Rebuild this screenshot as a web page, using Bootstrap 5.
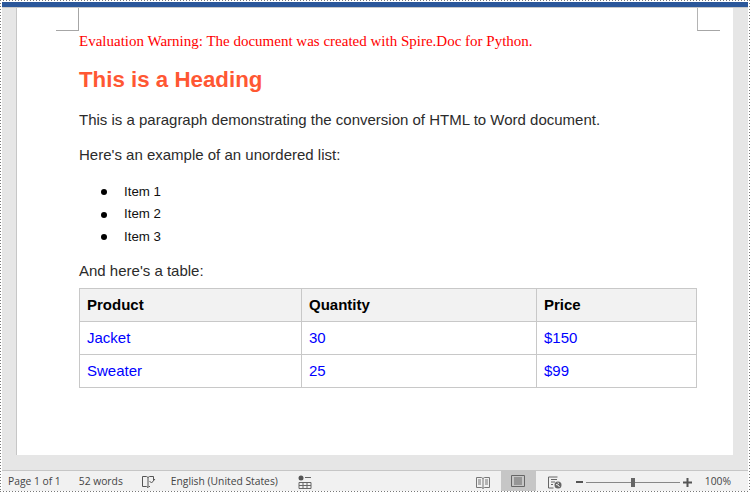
<!DOCTYPE html>
<html lang="en">
<head>
    <meta charset="UTF-8">
    <title>Word document</title>
    <link href="https://cdn.jsdelivr.net/npm/bootstrap@5.3.0/dist/css/bootstrap.min.css" rel="stylesheet">
    <style>
        html, body { height: 100%; overflow: hidden; }
        body { font-family: "Liberation Sans", Arial, sans-serif; background: #fff; color: #222; }
        .word-frame {
            width: 750px; height: 492px; padding: 2px;
            background:
                linear-gradient(90deg, #777 1px, transparent 1px) 0 0 / 3px 1px repeat-x,
                linear-gradient(90deg, #777 1px, transparent 1px) 0 100% / 3px 1px repeat-x,
                linear-gradient(#777 1px, transparent 1px) 0 0 / 1px 3px repeat-y,
                linear-gradient(#777 1px, transparent 1px) 100% 0 / 1px 3px repeat-y;
        }
        .title-strip { height: 5px; background: #2b579a; border-bottom: 1px solid #c9c9c9; box-sizing: content-box; }
        .canvas-area { height: 462px; background: #e6e6e6; padding: 0 15px 15px 14px; }
        .doc-page { position: relative; height: 447px; background: #fff; border-left: 1px solid #c6c6c6; padding: 25px 36px 0 62px; }
        .crop-l, .crop-r { position: absolute; top: 0; width: 23px; height: 23px; border-bottom: 1px solid #a6a6a6; }
        .crop-l { left: 39px; border-right: 1px solid #a6a6a6; }
        .crop-r { right: 13px; border-left: 1px solid #b4b4b4; }
        .eval-note { font-family: "Liberation Serif", "Times New Roman", serif; font-size: 15px; line-height: 17px; color: #f00; margin-bottom: 16px; }
        .doc-heading { font-family: "Liberation Sans", Arial, sans-serif; font-size: 22.3px; font-weight: 700; line-height: 28px; color: #ff5733; margin-bottom: 17px; }
        .doc-text { font-size: 15px; line-height: 18px; margin-bottom: 17px; color: #2b2b2b; }
        .doc-list { font-size: 13.3px; line-height: 22.4px; margin-bottom: 14px; padding-left: 22px; color: #111; list-style: none; }
        .doc-list li { display: flex; align-items: center; }
        .doc-list li::before { content: ""; width: 6px; height: 6px; border-radius: 50%; background: #000; margin-right: 17px; }
        .doc-table { font-size: 15px; width: 617px; table-layout: fixed; margin: 0; border-color: #c8c8c8; }
        .doc-table th, .doc-table td { padding: 6px 7px; height: 33px; line-height: 20px; vertical-align: middle; color: #00f; }
        .doc-table th { background: #f2f2f2; color: #000; }
        .status-strip { height: 18px; padding-top: 2px; background: #f1f1f1; border-top: 1px solid #c6c6c6; font-size: 10.3px; font-family: "Open Sans", sans-serif; color: #444; box-sizing: content-box; }
        .status-strip svg { display: block; }
        .view-on { background: #c6c6c6; width: 35px; height: 20px; margin-top: -2px; }
        .zoom-track { width: 94px; height: 1px; background: #888; position: relative; }
        .zoom-thumb { position: absolute; left: 45px; top: -4px; width: 4px; height: 9px; background: #666; }
    </style>
</head>
<body>
    <div class="word-frame">
        <div class="title-strip"></div>
        <div class="canvas-area">
            <div class="doc-page">
                <div class="crop-l"></div>
                <div class="crop-r"></div>
                <p class="eval-note">Evaluation Warning: The document was created with Spire.Doc for Python.</p>
                <h1 class="doc-heading">This is a Heading</h1>
                <p class="doc-text">This is a paragraph demonstrating the conversion of HTML to Word document.</p>
                <p class="doc-text">Here's an example of an unordered list:</p>
                <ul class="doc-list">
                    <li>Item 1</li>
                    <li>Item 2</li>
                    <li>Item 3</li>
                </ul>
                <p class="doc-text mb-2">And here's a table:</p>
                <table class="table table-bordered doc-table">
                    <colgroup><col style="width:222px"><col style="width:235px"><col style="width:160px"></colgroup>
                    <tr><th>Product</th><th>Quantity</th><th>Price</th></tr>
                    <tr><td>Jacket</td><td>30</td><td>$150</td></tr>
                    <tr><td>Sweater</td><td>25</td><td>$99</td></tr>
                </table>
            </div>
        </div>
        <div class="status-strip d-flex align-items-center">
            <span style="margin-left:6px">Page 1 of 1</span>
            <span style="margin-left:18px">52 words</span>
            <svg style="margin-left:18px" width="15" height="14" viewBox="0 0 15 14" fill="none" stroke="#555"><path d="M1.500 1.500h4l1.500 1v10l-1.500-1h-4zM7 2.500l1.500-1h4v4M7 12.500l1-1h1"/><path d="M8.500 6l2 2 3.500-4"/></svg>
            <span style="margin-left:15px">English (United States)</span>
            <svg style="margin-left:20px" width="14" height="14" viewBox="0 0 14 14" fill="none" stroke="#666"><circle cx="3" cy="3" r="2.500" fill="#555" stroke="none"/><path d="M7 2.500h6M1 7.500h12v6H1zM5 7.500v6M9 7.500v6M1 10.500h12"/></svg>
            <div class="ms-auto d-flex align-items-center">
                <svg width="14" height="13" viewBox="0 0 14 13" fill="none" stroke="#777"><path d="M.5 1.500h5l1.500 1 1.500-1h5v10h-5l-1.500 1-1.500-1h-5zM7 2.500v9.500M2 4h3M2 6h3M2 8h3M9 4h3M9 6h3M9 8h3"/></svg>
                <div class="view-on d-flex align-items-center justify-content-center" style="margin-left:11px">
                    <svg width="14" height="12" viewBox="0 0 14 12" fill="none" stroke="#666"><path d="M.5.500h13v11H.5zM3 3h8M3 5h8M3 7h8M3 9h8"/></svg>
                </div>
                <svg style="margin-left:12px" width="14" height="13" viewBox="0 0 14 13" fill="none" stroke="#666"><path d="M9.500 1H.5v11h5M3 3.500h6M3 6h4M3 8.500h2"/><circle cx="10" cy="9" r="3.500" fill="#666" stroke="none"/><path d="M8 8.500l2 .5 1.500 2M10 6.500l.5 1.500" stroke="#f1f1f1"/></svg>
                <span class="d-block" style="width:7px;height:2px;background:#555;margin-left:14px"></span>
                <div class="zoom-track" style="margin-left:3px"><span class="zoom-thumb"></span></div>
                <svg style="margin-left:3px" width="9" height="9" viewBox="0 0 9 9" stroke="#555" stroke-width="2"><path d="M0 4.500h9M4.500 0v9"/></svg>
                <span style="margin-left:13px;margin-right:17px">100%</span>
            </div>
        </div>
    </div>
    <script src="https://cdn.jsdelivr.net/npm/bootstrap@5.3.0/dist/js/bootstrap.bundle.min.js"></script>
</body>
</html>
